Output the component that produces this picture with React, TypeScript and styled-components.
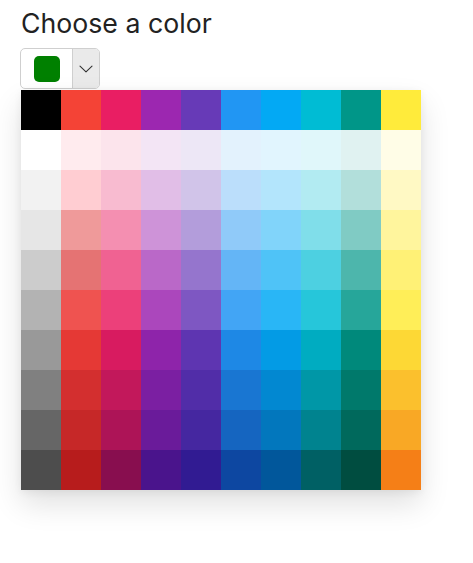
import React, { useState } from "react";
import styled, { createGlobalStyle } from "styled-components";

const GlobalStyle = createGlobalStyle`
  body {
    margin: 0;
    background: #ffffff;
    font-family: "Inter", "Noto Sans", sans-serif;
  }
`;

const grays = ["#000000", "#ffffff", "#f2f2f2", "#e6e6e6", "#cccccc", "#b3b3b3", "#999999", "#808080", "#666666", "#4d4d4d"];

// material shades in row order: 500, 50, 100, 200, 300, 400, 600, 700, 800, 900
const palettes: string[][] = [
  ["#f44336", "#ffebee", "#ffcdd2", "#ef9a9a", "#e57373", "#ef5350", "#e53935", "#d32f2f", "#c62828", "#b71c1c"],
  ["#e91e63", "#fce4ec", "#f8bbd0", "#f48fb1", "#f06292", "#ec407a", "#d81b60", "#c2185b", "#ad1457", "#880e4f"],
  ["#9c27b0", "#f3e5f5", "#e1bee7", "#ce93d8", "#ba68c8", "#ab47bc", "#8e24aa", "#7b1fa2", "#6a1b9a", "#4a148c"],
  ["#673ab7", "#ede7f6", "#d1c4e9", "#b39ddb", "#9575cd", "#7e57c2", "#5e35b1", "#512da8", "#4527a0", "#311b92"],
  ["#2196f3", "#e3f2fd", "#bbdefb", "#90caf9", "#64b5f6", "#42a5f5", "#1e88e5", "#1976d2", "#1565c0", "#0d47a1"],
  ["#03a9f4", "#e1f5fe", "#b3e5fc", "#81d4fa", "#4fc3f7", "#29b6f6", "#039be5", "#0288d1", "#0277bd", "#01579b"],
  ["#00bcd4", "#e0f7fa", "#b2ebf2", "#80deea", "#4dd0e1", "#26c6da", "#00acc1", "#0097a7", "#00838f", "#006064"],
  ["#009688", "#e0f2f1", "#b2dfdb", "#80cbc4", "#4db6ac", "#26a69a", "#00897b", "#00796b", "#00695c", "#004d40"],
  ["#ffeb3b", "#fffde7", "#fff9c4", "#fff59d", "#fff176", "#ffee58", "#fdd835", "#fbc02d", "#f9a825", "#f57f17"],
];

const columns = [grays, ...palettes];
const rows = [0, 1, 2, 3, 4, 5, 6, 7, 8, 9];

export default function App() {
  const [color, setColor] = useState("#008000");

  return (
    <Page>
      <GlobalStyle />
      <Title>Choose a color</Title>
      <Trigger type="button">
        <SwatchPart>
          <Swatch style={{ background: color }} />
        </SwatchPart>
        <ChevronPart>
          <svg width="14" height="8" viewBox="0 0 14 8" fill="none">
            <path d="M1 1.2l6 5.6 6-5.6" stroke="#333" strokeWidth="1.1" strokeLinecap="round" strokeLinejoin="round" />
          </svg>
        </ChevronPart>
      </Trigger>
      <Palette role="listbox">
        {rows.map((row) =>
          columns.map((col, c) => (
            <Cell
              key={`${row}-${c}`}
              role="option"
              title={col[row]}
              style={{ backgroundColor: col[row] }}
              onClick={() => setColor(col[row])}
            />
          ))
        )}
      </Palette>
    </Page>
  );
}

const Page = styled.div`
  display: flex;
  flex-direction: column;
  align-items: flex-start;
  min-height: 563px;
  box-sizing: border-box;
  padding: 7px 20px 60px 20px;
`;

const Title = styled.h1`
  margin: 0;
  font-family: "Inter", "Noto Sans", sans-serif;
  font-weight: 400;
  font-size: 26.7px;
  line-height: 32px;
  color: #222222;
  padding-left: 1px;
`;

const Trigger = styled.button`
  display: flex;
  align-items: stretch;
  margin-top: 9px;
  width: 80px;
  height: 41px;
  padding: 0;
  border: 1px solid #cfcfcf;
  border-radius: 5px;
  background: #ffffff;
  overflow: hidden;
  cursor: pointer;
`;

const SwatchPart = styled.div`
  display: flex;
  align-items: center;
  justify-content: center;
  width: 51px;
  border-right: 1px solid #cfcfcf;
`;

const Swatch = styled.div`
  width: 26px;
  height: 26px;
  border-radius: 5px;
`;

const ChevronPart = styled.div`
  flex: 1;
  display: flex;
  align-items: center;
  justify-content: center;
  background: #eaeaea;
`;

const Palette = styled.div`
  margin-top: 1px;
  margin-left: 1px;
  display: grid;
  grid-template-columns: repeat(10, 40px);
  grid-template-rows: repeat(10, 40px);
  box-shadow: 0 14px 28px rgba(0, 0, 0, 0.12), 0 2px 8px rgba(0, 0, 0, 0.06);
`;

const Cell = styled.div`
  width: 40px;
  height: 40px;
  cursor: pointer;
`;
